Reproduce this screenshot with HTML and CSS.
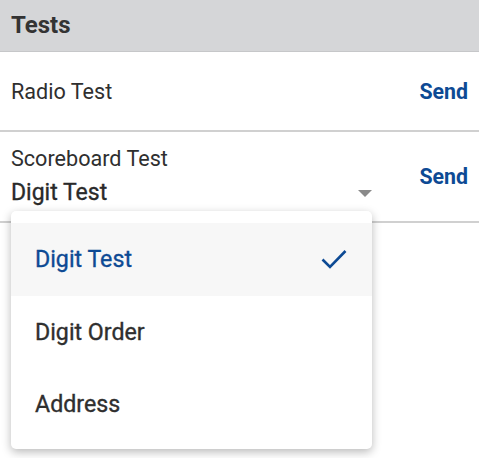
FILE: index.html
```html
<!DOCTYPE html>
<html>
<head>
<meta charset="utf-8">
<link rel="stylesheet" href="styles.css">
</head>
<body>
<div class="page">
  <div class="header">Tests</div>
  <div class="row row-radio">
    <span class="label">Radio Test</span>
    <span class="send">Send</span>
  </div>
  <div class="row row-score">
    <div class="field">
      <div class="label">Scoreboard Test</div>
      <div class="select">
        <span class="value">Digit Test</span>
        <span class="arrow"></span>
      </div>
    </div>
    <span class="send">Send</span>
  </div>
  <div class="menu">
    <div class="item selected">
      <span>Digit Test</span>
      <svg class="check" width="26" height="20" viewBox="0 0 26 20"><path d="M1.5 10.5 L9 18 L24.5 2" fill="none" stroke="#0d4a94" stroke-width="2.6"/></svg>
    </div>
    <div class="item"><span>Digit Order</span></div>
    <div class="item"><span>Address</span></div>
  </div>
</div>
</body>
</html>
```
FILE: styles.css
```css
html, body {
  margin: 0;
  padding: 0;
  background: #fff;
}
body {
  font-family: Roboto, "Liberation Sans", sans-serif;
  color: #2f2f2f;
}
.page {
  position: relative;
  width: 479px;
  height: 458px;
  overflow: hidden;
}
.header {
  height: 49px;
  padding-bottom: 2px;
  background: #d5d6d8;
  border-bottom: 1px solid #c6c7c9;
  box-sizing: content-box;
  padding-left: 11px;
  padding-right: 11px;
  display: flex;
  align-items: center;
  font-size: 24px;
  font-weight: 700;
  color: #333;
}
.row {
  display: flex;
  align-items: center;
  justify-content: space-between;
  padding: 0 11px;
  border-bottom: 2px solid #d0d0d0;
}
.row-radio {
  height: 78px;
}
.row-score {
  height: 89px;
}
.label {
  font-size: 21.6px;
  color: #2f2f2f;
}
.send {
  font-size: 21.3px;
  font-weight: 700;
  color: #0d4a94;
}
.field {
  display: flex;
  flex-direction: column;
  width: 361px;
  margin-top: -1px;
}
.select {
  display: flex;
  align-items: center;
  justify-content: space-between;
  margin-top: 8px;
}
.value {
  font-size: 23px;
  font-weight: 400;
  -webkit-text-stroke: 0.35px currentColor;
  color: #2a2a2a;
}
.arrow {
  width: 0;
  height: 0;
  border-left: 7px solid transparent;
  border-right: 7px solid transparent;
  border-top: 7px solid #8a8a8a;
  margin-top: 2px;
}
.menu {
  position: absolute;
  left: 11px;
  top: 211px;
  width: 361px;
  background: #fff;
  border-radius: 5px;
  box-shadow: 0 3px 10px rgba(0, 0, 0, 0.28);
  padding: 12px 0 8px;
}
.item {
  height: 72.5px;
  display: flex;
  align-items: center;
  justify-content: space-between;
  padding: 0 24px;
  font-size: 23.2px;
  font-weight: 400;
  -webkit-text-stroke: 0.35px currentColor;
  color: #2f2f2f;
}
.item.selected {
  background: #f7f7f7;
  color: #0d4a94;
}
.check {
  margin-right: 1px;
}
```
